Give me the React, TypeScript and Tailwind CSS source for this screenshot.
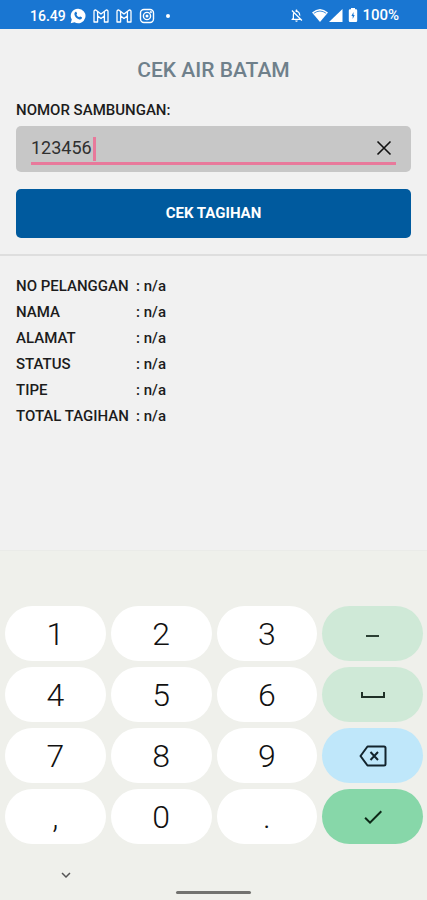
import { useState } from "react";
import type { ReactNode } from "react";
import { MdCheck, MdExpandMore, MdOutlineNotificationsOff } from "react-icons/md";

function GmailIcon() {
  return (
    <svg viewBox="0 0 16 14" className="h-[14px] w-4" fill="none" stroke="currentColor" strokeWidth="1.300" strokeLinejoin="round" aria-hidden="true">
      <path d="M1 2.600C1 1.200 2.400.6 3.400 1.400L8 5l4.600-3.600C13.600.6 15 1.200 15 2.600V13h-3.600V7L8 9.600 4.600 7v6H1z" />
      <path d="M4.600 7V2.400M11.400 7V2.400" />
    </svg>
  );
}

function WhatsappIcon() {
  return (
    <svg viewBox="0 0 16 16" className="size-4" aria-hidden="true">
      <path fill="currentColor" d="M8 .7A7.200 7.200 0 0 0 1.800 11.600L.7 15.300l3.800-1A7.300 7.300 0 1 0 8 .7z" />
      <path fill="#1976d2" d="M5.300 4c.5-.4 1-.3 1.200.2l.6 1.400c.1.400-.5.900-.7 1.200.6 1.200 1.500 2 2.700 2.500.4-.3.800-1 1.200-.8l1.400.7c.5.300.4.700.1 1.200-.7 1.100-1.900 1.200-3 .8C6.500 10.300 5 8.700 4.500 6.700 4.300 5.600 4.500 4.700 5.300 4z" />
    </svg>
  );
}

function InstagramIcon() {
  return (
    <svg viewBox="0 0 16 16" className="size-4" fill="none" stroke="currentColor" strokeWidth="1.400" aria-hidden="true">
      <rect x="1.500" y="1.500" width="13" height="13" rx="3.500" />
      <circle cx="8" cy="8" r="3.600" />
      <circle cx="8" cy="8" r=".8" />
      <circle cx="11.800" cy="4.200" r=".4" />
    </svg>
  );
}

function StatusBar() {
  return (
    <header className="flex h-[29px] items-center justify-between bg-[#1976d2] pt-[2px] pr-7 pl-[30px] text-sm font-medium text-white">
      <div className="flex items-center">
        <span className="w-10">16.49</span>
        <div className="flex items-center gap-[7px]">
          <WhatsappIcon />
          <GmailIcon />
          <GmailIcon />
          <InstagramIcon />
          <span className="ml-1 size-1 rounded-full bg-white" />
        </div>
      </div>
      <div className="flex items-center">
        <MdOutlineNotificationsOff className="size-[15px]" aria-hidden="true" />
        <svg viewBox="0 0 32 15" className="ml-2 h-[15px] w-8" fill="currentColor" aria-hidden="true">
          <path d="M0 4.500Q8 -2.500 16 4.500L8 14z" />
          <path d="M1.800 5.300Q8 .800 14.200 5.300" fill="none" stroke="#1976d2" strokeWidth=".8" />
          <path d="M30.500 1v13H17z" />
        </svg>
        <svg viewBox="0 0 10 14" className="ml-1 h-[14px] w-[10px]" aria-hidden="true">
          <path fill="currentColor" d="M3 1.300V0h4v1.300h1A1.200 1.200 0 0 1 9.200 2.500v10.300A1.200 1.200 0 0 1 8 14H2A1.200 1.200 0 0 1 .8 12.800V2.500A1.200 1.200 0 0 1 2 1.300z" />
          <path fill="#1976d2" d="M5.500 4 3.400 8h1.300v3L6.700 7H5.500z" />
        </svg>
        <span className="ml-1 text-[15px]">100%</span>
      </div>
    </header>
  );
}

const details = ["NO PELANGGAN", "NAMA", "ALAMAT", "STATUS", "TIPE", "TOTAL TAGIHAN"];

type Key = { label: string; face: ReactNode; tone: string };

const white = "bg-white";
const mint = "bg-[#cfe9d7]";

const keys: Key[] = [
  { label: "1", face: "1", tone: white },
  { label: "2", face: "2", tone: white },
  { label: "3", face: "3", tone: white },
  { label: "Minus", face: <span className="mt-1 h-[2px] w-[13px] bg-[#2c4034]" />, tone: mint },
  { label: "4", face: "4", tone: white },
  { label: "5", face: "5", tone: white },
  { label: "6", face: "6", tone: white },
  { label: "Spasi", face: <span className="h-[6px] w-6 border-2 border-t-0 border-[#1f3027]" />, tone: mint },
  { label: "7", face: "7", tone: white },
  { label: "8", face: "8", tone: white },
  { label: "9", face: "9", tone: white },
  {
    label: "Hapus",
    face: (
      <svg viewBox="0 0 28 22" className="h-[22px] w-7" fill="none" stroke="#13242d" strokeWidth="2" strokeLinejoin="round" aria-hidden="true">
        <path d="M8.500 1.500H25Q26.500 1.500 26.500 3V19Q26.500 20.500 25 20.500H8.500L1.500 11z" />
        <path d="m11.500 7 7.500 8M19 7l-7.500 8" />
      </svg>
    ),
    tone: "bg-[#bfe7fa]",
  },
  { label: "Koma", face: ",", tone: white },
  { label: "0", face: "0", tone: white },
  { label: "Titik", face: ".", tone: white },
  { label: "Selesai", face: <MdCheck className="size-6 text-[#0d2818]" aria-hidden="true" />, tone: "bg-[#87d7a9]" },
];

export default function App() {
  const [number, setNumber] = useState("123456");

  return (
    <div className="flex min-h-screen flex-col bg-[#f1f1f1] font-['Roboto',sans-serif] text-[#1c1c1c]">
      <StatusBar />
      <main className="flex-1">
        <form className="border-b-2 border-[#dedede] px-4 pt-[27px] pb-4" onSubmit={(e) => e.preventDefault()}>
          <h1 className="text-center text-[21px] leading-7 font-medium text-[#6f808b]">CEK AIR BATAM</h1>
          <label htmlFor="nomor" className="mt-4 block text-[15px] leading-5 font-medium">
            NOMOR SAMBUNGAN:
          </label>
          <div className="mt-[6px] h-[46px] rounded-[5px] bg-[#c7c7c7] px-[15px] pt-[7px]">
            <div className="relative flex h-8 items-center border-b-[3px] border-[#e8799b]">
              <input
                id="nomor"
                inputMode="numeric"
                value={number}
                onChange={(e) => setNumber(e.target.value)}
                className="min-w-0 flex-1 bg-transparent text-lg leading-7 text-[#303030] caret-[#e8799b] outline-none"
              />
              <span className="absolute top-1 left-[62px] h-6 w-[3px] bg-[#e8799b]" aria-hidden="true" />
              <button type="button" aria-label="Hapus nomor" className="flex w-6 justify-center" onClick={() => setNumber("")}>
                <svg viewBox="0 0 16 16" className="size-4" fill="none" stroke="#111" strokeWidth="1.600" aria-hidden="true">
                  <path d="M1.500 1.500l13 13M14.500 1.500l-13 13" />
                </svg>
              </button>
            </div>
          </div>
          <button type="submit" className="mt-[17px] h-[49px] w-full rounded-[5px] bg-[#005a9e] text-[15px] font-bold text-white">
            CEK TAGIHAN
          </button>
        </form>
        <dl className="grid grid-cols-[120px_1fr] px-4 pt-[17px] text-[15px] leading-[26px] font-medium">
          {details.map((name) => (
            <div key={name} className="contents">
              <dt>{name}</dt>
              <dd>: n/a</dd>
            </div>
          ))}
        </dl>
      </main>
      <section aria-label="Papan angka" className="border-t border-[#eaebe8] bg-[#eff0eb] pt-[55px] text-[#111]">
        <div className="grid grid-cols-4 gap-x-[5px] gap-y-[6px] pr-1 pl-[5px]">
          {keys.map((key) => (
            <button
              key={key.label}
              type="button"
              aria-label={key.label}
              className={`flex h-[55px] items-center justify-center rounded-full text-[32px] leading-none font-light ${key.tone}`}
            >
              {key.face}
            </button>
          ))}
        </div>
        <div className="grid h-14 grid-cols-3 items-center">
          <button type="button" aria-label="Tutup papan angka" className="mt-[6px] flex justify-center pr-[10px]">
            <MdExpandMore className="size-[18px] text-[#555]" />
          </button>
          <span className="mb-[6px] h-[3px] w-[75px] self-end justify-self-center rounded-full bg-[#72726f]" />
        </div>
      </section>
    </div>
  );
}
